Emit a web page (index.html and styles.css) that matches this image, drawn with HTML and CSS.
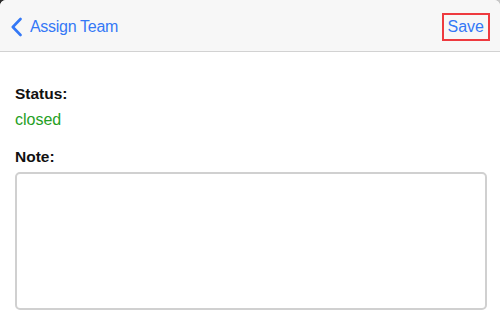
FILE: index.html
```html
<!doctype html>
<html lang="en">
  <head>
    <meta charset="UTF-8" />
    <meta name="viewport" content="width=device-width, initial-scale=1.0" />
    <title>Assign Team</title>
    <link rel="stylesheet" href="styles.css">
  </head>
  <body>
    <div class="screen">
      <!-- ナビゲーションバー -->
      <div class="navbar">
        <a class="back-link" href="#">
          <svg class="chevron" width="12" height="20" viewBox="0 0 12 20">
            <path d="M9.5 2 L1.8 10 L9.5 18" fill="none" stroke="currentColor" stroke-width="2.6" stroke-linecap="round" stroke-linejoin="round" />
          </svg>
          <span>Assign Team</span>
        </a>
        <button class="save-btn">Save</button>
      </div>

      <div class="content">
        <div class="field-label">Status:</div>
        <div class="status-value">closed</div>

        <label class="field-label note-label" for="note">Note:</label>
        <textarea id="note" class="note-input"></textarea>
      </div>
    </div>
  </body>
</html>
```

FILE: styles.css
```css
html {
  background: linear-gradient(to right, #2b2b2b, #c8c8c8);
}

body {
  margin: 0;
  font-family: 'Liberation Sans', Arial, sans-serif;
  font-size: 16px;
  color: #111;
}

.screen {
  width: 500px;
  height: 334px;
  background: #fff;
  border-radius: 6px 6px 0 0;
  overflow: hidden;
}

.navbar {
  height: 52px;
  box-sizing: border-box;
  background: #f7f7f7;
  border-bottom: 1px solid #d2d2d2;
  display: flex;
  align-items: center;
  justify-content: space-between;
  padding: 3px 10px 0 11px;
}

.back-link {
  display: flex;
  align-items: center;
  gap: 7px;
  color: #3478f6;
  text-decoration: none;
  font-size: 16px;
  letter-spacing: -0.3px;
}

.chevron {
  display: block;
}

.save-btn {
  background: none;
  border: 2px solid #ee3a3f;
  color: #3478f6;
  font-family: inherit;
  font-size: 16px;
  padding: 3px 4px;
  margin: 0;
  line-height: 18px;
  cursor: pointer;
}

.content {
  padding: 32px 13px 0 15px;
  display: flex;
  flex-direction: column;
}

.field-label {
  font-weight: bold;
  font-size: 15.5px;
  line-height: 19px;
}

.status-value {
  color: #25a025;
  line-height: 19px;
  margin-top: 7px;
}

.note-label {
  margin-top: 18px;
}

.note-input {
  margin-top: 6px;
  height: 138px;
  box-sizing: border-box;
  border: 2px solid #d0d0d0;
  border-radius: 5px;
  resize: none;
  font-family: inherit;
  font-size: 16px;
  padding: 6px;
}
```
